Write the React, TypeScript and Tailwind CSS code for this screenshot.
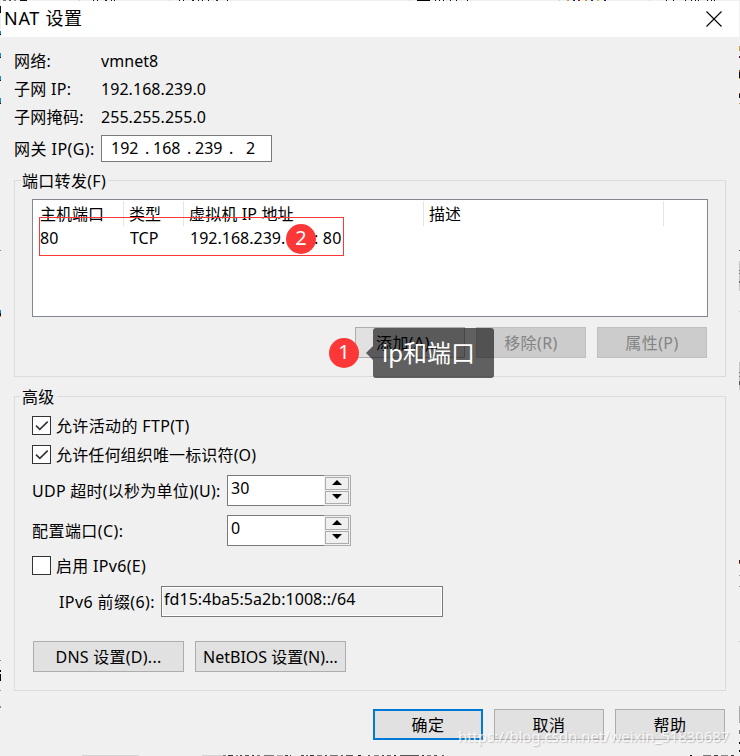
import type { ReactNode } from "react";
import { clsx } from "clsx";

// slivers of the window behind the dialog: [x, width, colour]
const topEdge: [number, number, string][] = [
  [3, 3, "#777"], [9, 2, "#555"], [14, 2, "#888"], [20, 7, "#111"], [79, 1, "#ccc"],
  [93, 1, "#111"], [97, 1, "#111"], [105, 2, "#222"], [111, 1, "#111"], [114, 1, "#111"],
  [169, 1, "#ccc"], [179, 1, "#111"], [183, 1, "#111"], [192, 2, "#222"], [198, 1, "#111"],
  [202, 1, "#111"], [208, 1, "#111"], [216, 2, "#333"], [227, 1, "#111"], [409, 1, "#ccc"],
  [417, 13, "#000"], [435, 1, "#111"], [439, 1, "#111"], [443, 1, "#111"], [450, 1, "#111"],
  [456, 1, "#111"], [467, 1, "#111"], [559, 1, "#ccc"], [567, 2, "#c93"], [573, 2, "#136"],
  [578, 2, "#823"], [585, 2, "#c93"], [591, 2, "#136"], [597, 2, "#cb4"], [604, 2, "#124"],
  [649, 1, "#ccc"], [666, 1, "#111"], [673, 1, "#111"], [685, 1, "#111"], [691, 1, "#111"],
  [695, 1, "#111"], [698, 1, "#111"], [707, 1, "#111"], [711, 1, "#111"], [714, 1, "#111"],
];

const bottomEdge: [number, number, string][] = [
  [82, 57, "#d4d4d4"], [202, 21, "#d4d4d4"], [223, 3, "#777"], [228, 5, "#333"], [236, 2, "#888"],
  [240, 2, "#444"], [245, 4, "#555"], [252, 2, "#333"], [257, 3, "#777"], [264, 10, "#777"],
  [277, 6, "#aaa"], [285, 3, "#444"], [290, 1, "#333"], [301, 3, "#444"], [306, 2, "#666"],
  [310, 4, "#333"], [317, 5, "#777"], [325, 2, "#444"], [330, 8, "#777"], [341, 2, "#555"],
  [346, 7, "#555"], [358, 3, "#222"], [368, 2, "#555"], [374, 5, "#888"], [382, 2, "#444"],
  [387, 4, "#666"], [394, 2, "#333"], [400, 19, "#555"], [422, 2, "#333"], [427, 4, "#777"],
  [434, 3, "#555"], [442, 2, "#555"], [690, 2, "#111"], [703, 8, "#777"], [714, 4, "#444"],
  [721, 7, "#888"], [731, 3, "#333"],
];

const leftEdge: [number, number, string][] = [
  [6, 7, "#111"], [31, 3, "#28c"], [34, 1, "#111"], [53, 4, "#28c"], [57, 1, "#111"],
  [76, 4, "#28c"], [80, 1, "#400"], [98, 5, "#28c"], [103, 1, "#400"], [250, 1, "#888"],
  [310, 3, "#28c"], [313, 3, "#111"], [316, 1, "#e92"], [660, 1, "#888"], [670, 2, "#000"],
  [674, 7, "#000"], [690, 1, "#999"], [706, 2, "#888"],
];

const rightEdge: [number, number, string][] = [
  [46, 5, "#c93"], [56, 2, "#613"], [70, 2, "#a52"], [72, 6, "#111"], [78, 1, "#c93"],
  [93, 1, "#a52"], [94, 4, "#112"], [103, 1, "#c93"], [250, 1, "#555"], [261, 30, "#c6c6c6"],
  [270, 1, "#777"], [273, 1, "#777"], [281, 2, "#666"], [311, 1, "#ccc"], [362, 28, "#c6c6c6"],
  [372, 1, "#777"], [376, 1, "#777"], [381, 4, "#555"], [560, 3, "#411"], [563, 1, "#a52"],
  [575, 1, "#999"], [586, 1, "#888"], [641, 1, "#ccc"], [706, 17, "#aaa"], [730, 4, "#777"],
  [742, 2, "#111"], [750, 2, "#111"],
];

const HorizontalEdge = ({ marks, className }: { marks: [number, number, string][]; className: string }) => (
  <svg className={clsx("absolute left-0 w-[740px] h-px", className)} shapeRendering="crispEdges">
    {marks.map(([x, w, c]) => <rect key={x} x={x} y="0" width={w} height="1" fill={c} />)}
  </svg>
);

const VerticalEdge = ({ marks, className }: { marks: [number, number, string][]; className: string }) => (
  <svg className={clsx("absolute top-0 w-px h-[756px]", className)} shapeRendering="crispEdges">
    {marks.map(([y, h, c]) => <rect key={y} x="0" y={y} width="1" height={h} fill={c} />)}
  </svg>
);

const DialogButton = ({ children, className, disabled, primary }: { children: ReactNode; className?: string; disabled?: boolean; primary?: boolean }) => (
  <button
    disabled={disabled}
    className={clsx(
      "h-[31px] flex items-center justify-center whitespace-nowrap",
      className ?? "w-[110px] tracking-[0.4px]",
      disabled ? "bg-[#cccccc] border border-[#bfbfbf] text-[#838383]" : "bg-[#e1e1e1]",
      !disabled && (primary ? "border-2 border-[#0078d7]" : "border border-[#adadad]"),
    )}
  >
    {children}
  </button>
);

const GroupBox = ({ title, className, children }: { title: string; className: string; children: ReactNode }) => (
  <section className={clsx("relative ml-[13px] w-[712px] border border-[#dcdcdc]", className)}>
    <h2 className="absolute left-[6px] -top-[12px] h-6 leading-6 bg-[#f0f0f0] pl-px pr-[2px] tracking-[0.3px]">{title}</h2>
    {children}
  </section>
);

const CheckRow = ({ label, checked, className }: { label: string; checked?: boolean; className?: string }) => (
  <label className={clsx("flex items-center h-[19px] gap-[5px] whitespace-nowrap", className)}>
    <span className="w-[19px] h-[19px] bg-white border border-[#333333]">
      {checked && (
        <svg viewBox="0 0 17 17" className="w-[17px] h-[17px]" fill="none" stroke="#333" strokeWidth="1.6">
          <path d="M3 8.7 L6.8 12.3 L14.7 4.6" />
        </svg>
      )}
    </span>
    {label}
  </label>
);

const SpinButton = ({ up }: { up?: boolean }) => (
  <span className="w-6 h-[13px] border border-[#adadad] bg-[#f0f0f0] flex justify-center pt-[2px]">
    <svg width="10" height="5" viewBox="0 0 10 5">
      <path d={up ? "M0 5 L5 0 L10 5Z" : "M0 0 L5 5 L10 0Z"} fill="#000" />
    </svg>
  </span>
);

const Spinner = ({ value }: { value: string }) => (
  <div className="flex w-[124px] h-[31px]">
    <span className="w-[97px] bg-white border border-r-0 border-[#7a7a7a] pl-[3px] leading-[24px]">{value}</span>
    <span className="w-[27px] border border-l-0 border-[#adadad] bg-[#f0f0f0] pt-px pl-px flex flex-col gap-px">
      <SpinButton up />
      <SpinButton />
    </span>
  </div>
);

const Badge = ({ children, className }: { children: ReactNode; className: string }) => (
  <span className={clsx("absolute w-[30px] h-[30px] rounded-full bg-[#fc3737] text-white text-[20px] leading-[28px] text-center", className)}>
    {children}
  </span>
);

const info = [
  ["网络:", "vmnet8"],
  ["子网 IP:", "192.168.239.0"],
  ["子网掩码:", "255.255.255.0"],
];

const App = () => {
  return (
    <div className="relative w-[740px] h-[756px] overflow-hidden bg-[#f0f0f0] p-px text-black text-[16px] font-['Noto_Sans','Noto_Sans_CJK_SC',sans-serif]">
      <header className="h-9 bg-white flex items-center justify-between pl-[3px] pr-[17px]">
        <h1 className="text-[18px] leading-6 tracking-[0.7px] pb-[2px]">NAT 设置</h1>
        <svg className="mb-px" width="16" height="16" viewBox="0 0 16 16" stroke="#000" strokeWidth="1.1">
          <path d="M0.5 0.5 L15.5 15.5 M15.5 0.5 L0.5 15.5" />
        </svg>
      </header>

      <div className="pt-[10px] pl-[13px]">
        {info.map(([name, value]) => (
          <div key={name} className="flex h-7 items-center">
            <span className="w-[87px] tracking-[0.3px]">{name}</span>
            <span className="tracking-[0.05px]">{value}</span>
          </div>
        ))}
        <div className="flex h-[27px] mt-[4px] items-center whitespace-nowrap">
          <span className="w-[87px] tracking-[0.45px]">网关 IP(G):</span>
          <div className="w-[171px] h-[27px] bg-white border border-[#7a7a7a] flex items-center pl-[9px] pb-[2px]">
            <span className="w-[34px]">192</span>
            <span className="w-[8px]">.</span>
            <span className="w-[34px]">168</span>
            <span className="w-[8px]">.</span>
            <span className="w-[34px]">239</span>
            <span className="w-[17px]">.</span>
            <span>2</span>
          </div>
        </div>
      </div>

      <GroupBox title="端口转发(F)" className="mt-[18px] h-[197px] pt-[18px] pl-[17px]">
        <div className="w-[676px] h-[118px] bg-white border border-[#828790] pt-px">
          <div className="flex h-[25px] leading-[27px]">
            <span className="w-[91px] pl-[7px] border-r border-[#e5e5e5]">主机端口</span>
            <span className="w-[60px] pl-[5px] border-r border-[#e5e5e5]">类型</span>
            <span className="w-[240px] pl-[5px] border-r border-[#e5e5e5] tracking-[0.15px]">虚拟机 IP 地址</span>
            <span className="w-[240px] pl-[5px] border-r border-[#e5e5e5]">描述</span>
          </div>
          <div className="flex h-[24px] leading-[24px] whitespace-pre">
            <span className="w-[91px] pl-[7px]">80</span>
            <span className="w-[60px] pl-[6px]">TCP</span>
            <span className="w-[130px] pl-[6px]">192.168.239.</span>
            <span className="tracking-[0.2px]">: 80</span>
          </div>
        </div>
        <div className="flex gap-[11px] mt-[10px] pl-[323px]">
          <DialogButton>添加(A)...</DialogButton>
          <DialogButton disabled>移除(R)</DialogButton>
          <DialogButton disabled>属性(P)</DialogButton>
        </div>
      </GroupBox>

      <GroupBox title="高级" className="mt-[19px] h-[295px] pt-[19px] pl-[17px]">
        <CheckRow label="允许活动的 FTP(T)" checked className="tracking-[0.35px]" />
        <div className="h-[10px]" />
        <CheckRow label="允许任何组织唯一标识符(O)" checked className="tracking-[0.15px]" />
        <div className="flex items-center mt-[11px] whitespace-nowrap">
          <span className="w-[195px] tracking-[0.25px]">UDP 超时(以秒为单位)(U):</span>
          <Spinner value="30" />
        </div>
        <div className="flex items-center mt-[9px]">
          <span className="w-[195px] tracking-[0.45px]">配置端口(C):</span>
          <Spinner value="0" />
        </div>
        <div className="h-[10px]" />
        <CheckRow label="启用 IPv6(E)" className="tracking-[0.3px]" />
        <div className="flex items-center mt-[11px] pl-[27px] whitespace-nowrap">
          <span className="w-[102px] tracking-[0.4px]">IPv6 前缀(6):</span>
          <span className="w-[282px] h-[31px] border border-[#7a7a7a] shadow-[inset_0_0_0_1px_#fff] pl-[2px] leading-[24px] tracking-[0.05px]">fd15:4ba5:5a2b:1008::/64</span>
        </div>
        <div className="flex gap-[11px] mt-6 pl-px">
          <DialogButton className="w-[151px] tracking-[0.25px]">DNS 设置(D)...</DialogButton>
          <DialogButton className="w-[151px]">NetBIOS 设置(N)...</DialogButton>
        </div>
      </GroupBox>

      <footer className="flex gap-[11px] mt-[18px] pl-[372px]">
        <DialogButton primary>确定</DialogButton>
        <DialogButton>取消</DialogButton>
        <DialogButton>帮助</DialogButton>
      </footer>

      {/* annotations */}
      <div className="absolute left-[39px] top-[217px] w-[305px] h-[39px] border border-[#fc3737]" />
      <Badge className="left-[286px] top-[224px]">2</Badge>
      <Badge className="left-[329px] top-[338px]">1</Badge>
      <div className="absolute left-[373px] top-[328px] w-[121px] h-[50px] rounded-[3px] bg-black/60 text-white text-[24px] leading-[50px] pl-[9px] whitespace-nowrap">
        ip和端口
      </div>
      <svg className="absolute left-[366px] top-[346px]" width="7" height="14" viewBox="0 0 7 14">
        <path d="M7 0 L0 7 L7 14Z" fill="#000" fillOpacity="0.6" />
      </svg>

      <span className="absolute left-[458px] top-[726px] text-[15px] leading-5 tracking-[-0.05px] text-white/80 whitespace-nowrap [text-shadow:1px_1px_1px_#9998]">
        https://blog.csdn.net/weixin_51830687
      </span>

      <HorizontalEdge marks={topEdge} className="top-0" />
      <HorizontalEdge marks={bottomEdge} className="top-[755px]" />
      <VerticalEdge marks={leftEdge} className="left-0" />
      <VerticalEdge marks={rightEdge} className="left-[739px]" />
    </div>
  );
};

export default App;
